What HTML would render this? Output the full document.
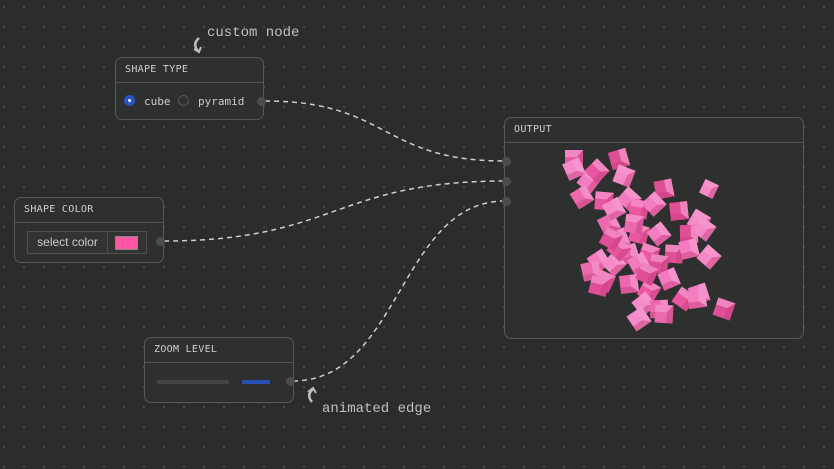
<!DOCTYPE html><html><head><style>
body{margin:0;width:834px;height:469px;overflow:hidden;background:#2b2c2c;background-image:radial-gradient(#4a4b4b 1px,transparent 1.2px);background-size:20px 20px;background-position:-6px -3px;font-family:"DejaVu Sans Mono","Liberation Mono",monospace;position:relative}
.n{position:absolute;background:#2e2f2f;border:1px solid #58595a;border-radius:7px;box-sizing:border-box}
.h{height:24px;border-bottom:1px solid #505152;font-size:10px;color:#d0d0d0;line-height:24px;padding-left:9px;letter-spacing:0.3px}
.hd{position:absolute;width:9px;height:9px;border-radius:50%;background:#4a4c50}
.lbl{position:absolute;color:#bfc2c2;font-size:14px;font-family:"Liberation Mono",monospace}
</style></head><body>
<svg width="834" height="469" style="position:absolute;left:0;top:0" fill="none">
<g stroke="#cfcfcf" stroke-width="1.5" stroke-dasharray="5 4">
<path d="M265 101 C390 101 380 161 505 161"/>
<path d="M164 241 C335 241 335 181 505 181"/>
<path d="M293 381 C400 381 400 201 505 201"/>
</g>
<path d="M199 38 q-7 6 -1 13" stroke="#bbb" stroke-width="2.5"/>
<path d="M194 49 l5 3 l2 -5" stroke="#bbb" stroke-width="2"/>
<path d="M313 389 q-7 6 -1 13" stroke="#bbb" stroke-width="2.5"/>
<path d="M308 392 l5 -4 l3 5" stroke="#bbb" stroke-width="2"/>
</svg>
<div class="lbl" style="left:207px;top:25px">custom node</div>
<div class="lbl" style="left:322px;top:401px">animated edge</div>

<div class="n" style="left:115px;top:57px;width:149px;height:63px"><div class="h">SHAPE TYPE</div>
<div style="position:absolute;left:8px;top:37px;width:11px;height:11px;border-radius:50%;background:#2a55c0"><div style="position:absolute;left:4px;top:4px;width:3px;height:3px;background:#fff;border-radius:50%"></div></div>
<div style="position:absolute;left:28px;top:37px;font-size:11px;color:#ccc">cube</div>
<div style="position:absolute;left:62px;top:37px;width:9px;height:9px;border-radius:50%;border:1.5px solid #555"></div>
<div style="position:absolute;left:82px;top:37px;font-size:11px;color:#ccc">pyramid</div></div>
<div class="hd" style="left:257px;top:97px"></div>

<div class="n" style="left:14px;top:197px;width:150px;height:66px"><div class="h">SHAPE COLOR</div>
<div style="position:absolute;left:12px;top:33px;width:120px;height:23px;border:1px solid #4e5050;background:#323333;box-sizing:border-box">
<div style="position:absolute;left:0;top:0;width:79px;height:21px;border-right:1px solid #4e5050;font-family:'Liberation Sans',sans-serif;font-size:12px;color:#ccc;line-height:21px;text-align:center">select color</div>
<div style="position:absolute;left:87px;top:4px;width:21px;height:12px;background:#ff57a5;border:1px solid #888"></div></div></div>
<div class="hd" style="left:156px;top:237px"></div>

<div class="n" style="left:144px;top:337px;width:150px;height:66px"><div class="h">ZOOM LEVEL</div>
<div style="position:absolute;left:12px;top:42px;width:72px;height:4px;background:#434445;border-radius:2px"></div>
<div style="position:absolute;left:97px;top:42px;width:28px;height:4px;background:#2a4fb5"></div></div>
<div class="hd" style="left:286px;top:377px"></div>

<div class="n" style="left:504px;top:117px;width:300px;height:222px"><div class="h">OUTPUT</div>
<svg width="300" height="222" style="position:absolute;left:-1px;top:-1px">
<g id="c"></g></svg></div>
<div class="hd" style="left:502px;top:157px"></div>
<div class="hd" style="left:502px;top:177px"></div>
<div class="hd" style="left:502px;top:197px"></div>
<script>
var p=[[575,160],[590,182],[620,160],[625,177],[583,198],[605,202],[630,200],[665,190],[710,190],[610,225],[640,210],[655,205],[680,212],[700,222],[620,240],[640,235],[660,235],[690,235],[705,230],[630,255],[650,255],[600,262],[675,255],[710,258],[592,272],[605,282],[640,265],[660,265],[615,265],[630,285],[650,292],[670,280],[600,287],[645,305],[660,310],[685,300],[700,295],[725,310],[640,320],[665,315],[620,250],[690,250],[648,275],[615,210],[635,225],[598,172],[698,300],[612,240],[575,170]];
var cols=["#e8579f","#f27cbf","#de4f95","#f48ac7","#eb6aae"];var s="";
p.forEach(function(q,i){var sz=(q[0]==710&&q[1]==190)?15:18+(i*7)%7;var x=q[0]-505,y=q[1]-118;var r=(i*37)%90;var h=sz/2;
s+='<g transform="translate('+x+','+y+') rotate('+r+')"><rect x="'+(-h)+'" y="'+(-h)+'" width="'+sz+'" height="'+sz+'" fill="'+cols[i%5]+'"/><polygon points="'+(-h)+','+(-h)+' '+h+','+(-h)+' '+(h*0.3)+','+(-h*0.2)+' '+(-h)+','+(-h*0.2)+'" fill="#f79ad0" opacity="0.7"/><polygon points="'+h+','+(-h)+' '+h+','+h+' '+(h*0.3)+','+h+' '+(h*0.3)+','+(-h*0.2)+'" fill="#c9407f" opacity="0.5"/></g>';});
document.getElementById("c").innerHTML=s;
</script>
</body></html>
